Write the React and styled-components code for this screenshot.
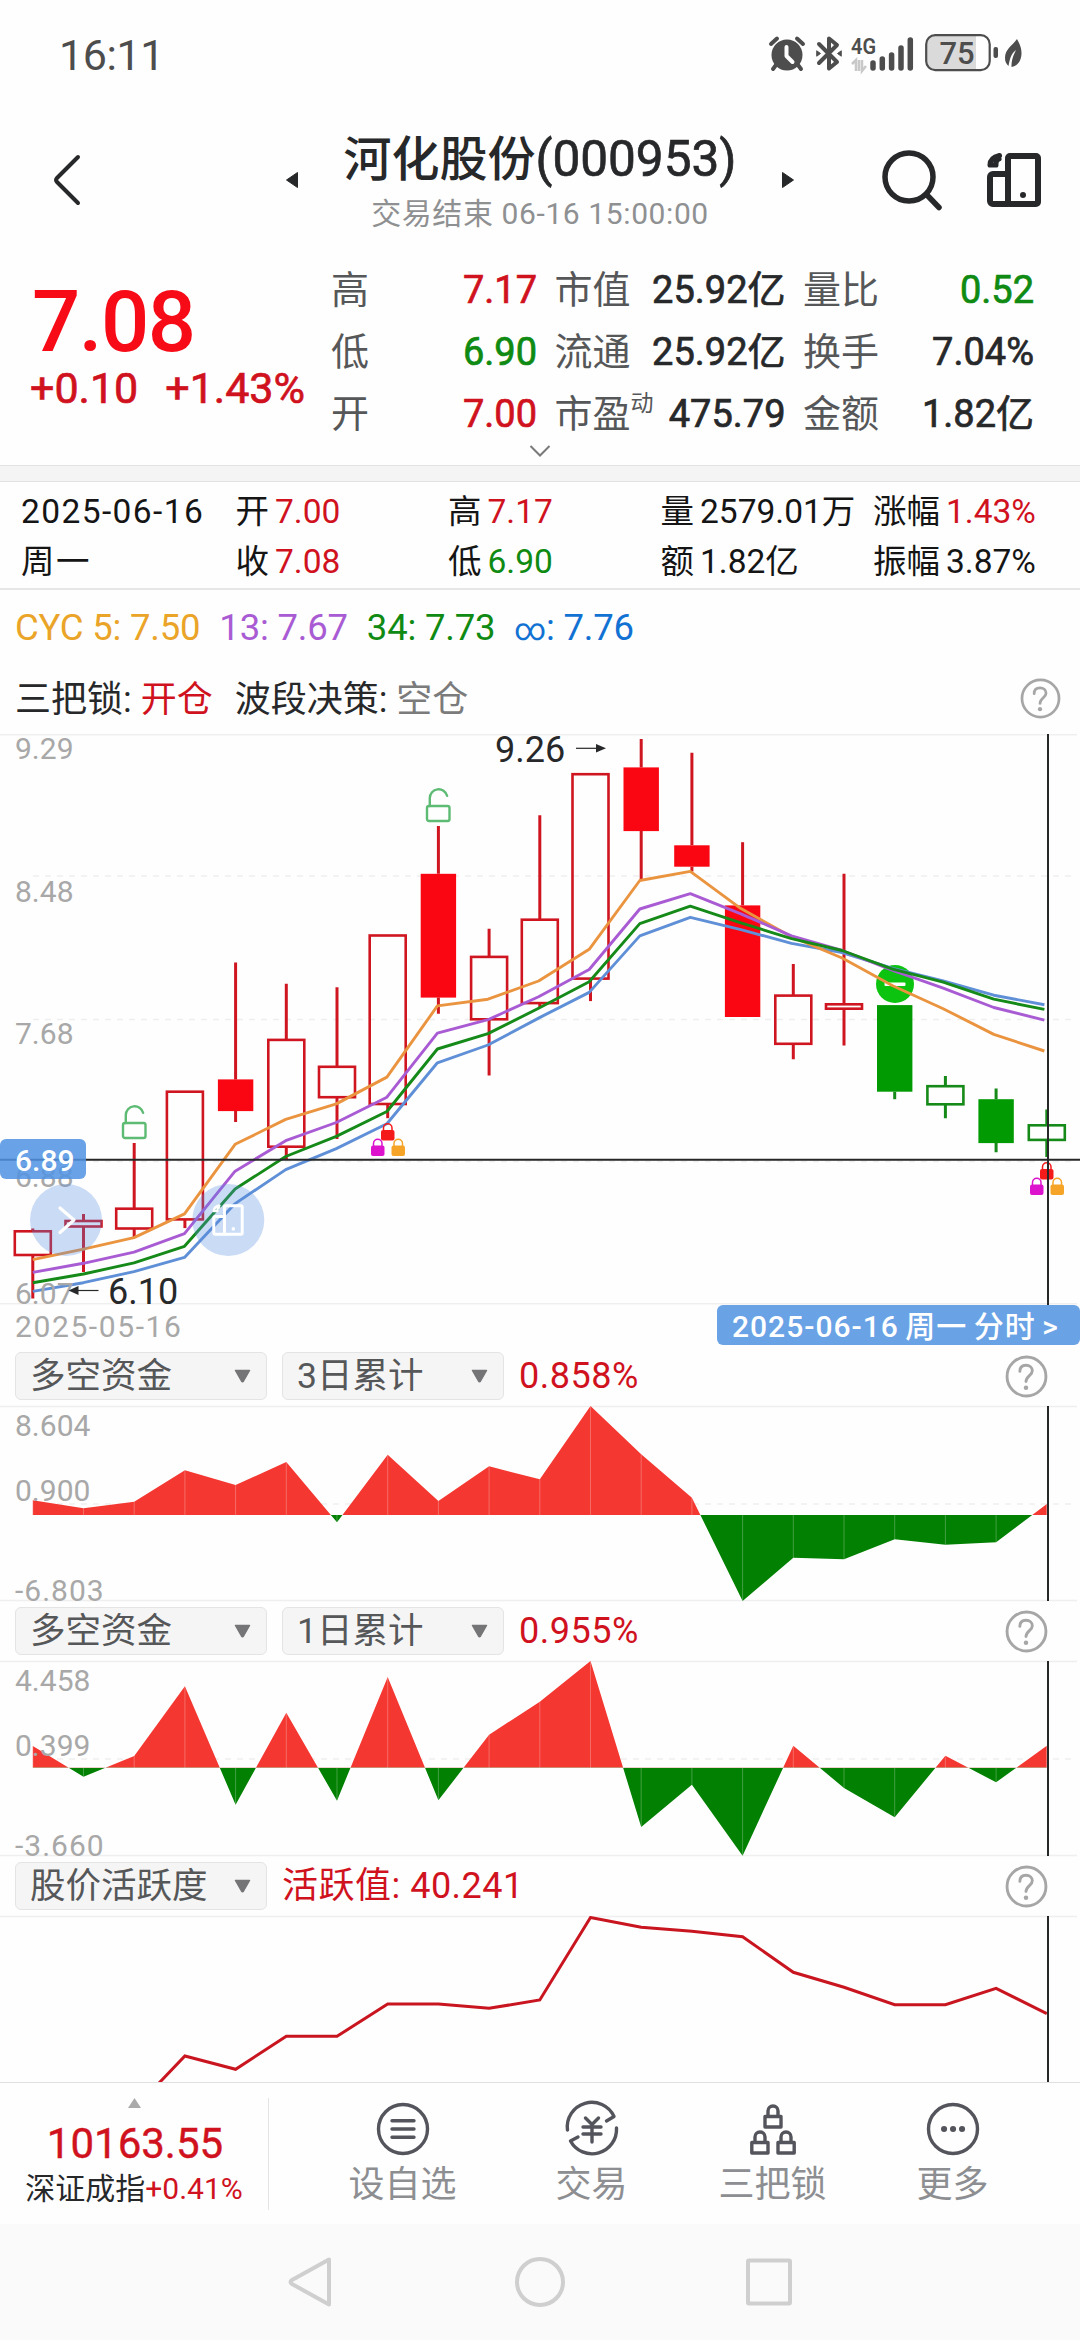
import React from 'react'
import styled, { createGlobalStyle } from 'styled-components';

const GlobalStyle = createGlobalStyle`
    *{
        box-sizing: border-box;
    }
    body{
        margin: 0;
        background: #fefefe;
        color: #27282a;
        font-family: Roboto, 'Noto Sans CJK SC', sans-serif;
    }
    svg{
        display: block;
        flex: none;
        overflow: visible;
    }
`;

const RED = '#d0121e';
const GREEN = '#0f8a12';

const STATS = [
    ['高', '7.17', RED], ['市值', '25.92亿'], ['量比', '0.52', GREEN],
    ['低', '6.90', GREEN], ['流通', '25.92亿'], ['换手', '7.04%'],
    ['开', '7.00', RED], ['市盈', '475.79', null, '动'], ['金额', '1.82亿'],
];

const DAY = [
    ['2025-06-16'], ['开', '7.00', RED], ['高', '7.17', RED], ['量', '2579.01万'], ['涨幅', '1.43%', RED],
    ['周一'], ['收', '7.08', RED], ['低', '6.90', GREEN], ['额', '1.82亿'], ['振幅', '3.87%'],
];

const FIRST_X = 32.8;
const STEP = 50.7;
const xAt = (i) => FIRST_X + i * STEP;

// high, body top, body bottom, low, kind (h = hollow, s = solid), direction
const CANDLES = [
    [494.5, 497.3, 521, 564.5, 'h', 'up'],
    [479.9, 487, 492.5, 538, 'h', 'up'],
    [409.1, 474.7, 494.5, 504, 'h', 'up'],
    [357.7, 357.7, 485.4, 494.1, 'h', 'up'],
    [228.4, 345.4, 377.1, 388.1, 's', 'up'],
    [249.7, 305.9, 412.7, 424.9, 'h', 'up'],
    [253.3, 332.8, 363.2, 405.1, 'h', 'up'],
    [201.5, 201.5, 370, 384.2, 'h', 'up'],
    [92, 139.8, 263.6, 279.8, 's', 'up'],
    [194.8, 222.9, 285.3, 341.5, 'h', 'up'],
    [81.3, 185.7, 269.1, 273.5, 'h', 'up'],
    [40.2, 40.2, 244.6, 267.1, 'h', 'up'],
    [5, 33.4, 97.1, 146.1, 's', 'up'],
    [18.8, 111.3, 132.7, 137.4, 's', 'up'],
    [108.2, 171.4, 283, 283, 's', 'up'],
    [230, 261.6, 309.8, 325.3, 'h', 'up'],
    [139.8, 270.3, 274.7, 311.4, 'h', 'up'],
    [271.1, 271.1, 357.7, 365.2, 's', 'down'],
    [341.9, 352.2, 370.3, 384.2, 'h', 'down'],
    [354.5, 365.2, 409.1, 418.2, 's', 'down'],
    [375.5, 391.3, 405.9, 422.9, 'h', 'down'],
];

const AVERAGES = [
    ['#5f8fd6', [557.4, 548.7, 537.6, 523.4, 469.6, 435.6, 414.6, 389.7, 328.8, 311, 284.1, 258.4, 201.9, 183.3, 195.6, 209.4, 218.5, 234.3, 247, 261.2, 270.7]],
    ['#ea9440', [525.7, 515.1, 503.6, 479.9, 410.3, 385.4, 369.9, 343.1, 271.9, 265.2, 247, 215.3, 146.5, 137.4, 174.6, 202.7, 224, 251.7, 274.7, 300.4, 317]],
    ['#a95bd3', [538.4, 529.3, 518.2, 499.6, 437.2, 406.7, 388.5, 363.2, 299.2, 285.7, 262.8, 235.5, 175, 159.6, 179.8, 201.9, 216.5, 236.3, 254.1, 273.5, 286.1]],
    ['#158a18', [548.7, 540, 528.9, 512.3, 455, 422.5, 402.4, 377.5, 315, 299.6, 274.3, 247.8, 189.6, 172.2, 188.8, 204.7, 216.5, 235.1, 248.2, 265.2, 275.4]],
];

const FUND_3D = [94.3, 102.3, 95.7, 64.3, 79, 56, 116.3, 48.7, 95, 60.3, 73.3, 0, 48.3, 91.7, 195, 151.7, 153.3, 133.3, 138.7, 136.3, 98];
const FUND_1D = [85, 115.7, 95, 25.3, 143.7, 51.7, 139.7, 16, 139.3, 73.7, 40.7, 0, 166, 123.7, 194.7, 84.7, 127, 156.3, 94.7, 121.3, 84.7];
const ACTIVE = [230, 210, 193, 140, 153.3, 120.3, 120.3, 88, 88, 92.3, 84, 1.5, 11.3, 15.3, 20.7, 56.3, 71.3, 88.7, 88.7, 72.3, 97.7];

function PhoneIcon({ size, stroke, color }) {
    return (
        <svg width={size} height={size} viewBox="0 0 54 54" fill="none" stroke={color} strokeWidth={stroke} strokeLinejoin="round" strokeLinecap="round">
            <rect x="21" y="3" width="30" height="48" rx="2" />
            <path d="M21 21H6a3 3 0 0 0-3 3v24a3 3 0 0 0 3 3h15" />
            <path d="M12.500 2.500C6 4 3 7 3 12h6M9 10.500c0-2.500.5-3.500 3-4.500" strokeWidth={stroke * 0.85} />
            <circle cx="36" cy="42" r="3" fill={color} stroke="none" />
        </svg>
    )
}

function Help({ size = 40 }) {
    return (
        <svg width={size} height={size + 2} viewBox="0 0 40 42" fill="none" stroke="#a6a6a6" strokeWidth="2.8" strokeLinecap="round">
            <circle cx="20" cy="21" r="19" />
            <path d="M13.5 16c0-4 2.5-6 6-6s6.200 2.200 6.200 5.500c0 4.500-6.200 5-6.200 10.500" />
            <circle cx="19.500" cy="32" r="2.200" fill="#a6a6a6" stroke="none" />
        </svg>
    )
}

function StatusIcons() {
    return (
        <StatusIconRow>
            <svg width="36" height="35" viewBox="0 0 36 35">
                <circle cx="18" cy="19" r="15.500" fill="#4d4d4d" />
                <path d="M2 8l6-5.500M34 8l-6-5.500M7 29l-3 4M29 29l3 4" stroke="#4d4d4d" strokeWidth="4" strokeLinecap="round" />
                <path d="M17.500 11v9l6 6" stroke="#fff" strokeWidth="4" fill="none" strokeLinecap="round" strokeLinejoin="round" />
            </svg>
            <svg width="26" height="35" viewBox="0 0 26 35" fill="none" stroke="#4d4d4d" strokeWidth="4" strokeLinejoin="round" strokeLinecap="round">
                <path d="M3 8l18 18-8 6.500V2.500L21 9 3 27" />
                <path d="M1 15l3.500 2.500L1 20zM25 15l-3.500 2.500L25 20z" fill="#4d4d4d" strokeWidth="1" />
            </svg>
            <svg width="63" height="35" viewBox="0 0 63 35">
                <text x="0" y="17.500" fontSize="22" fontWeight="600" fill="#4d4d4d" textLength="25" lengthAdjust="spacingAndGlyphs">4G</text>
                <path d="M1 28l4-4v11M8 24v11M11 24v11l4-5" fill="none" stroke="#c8c8c8" strokeWidth="2.500" />
                <g stroke="#4d4d4d" strokeWidth="5.500" strokeLinecap="round">
                    <path d="M22 27v5M31.300 23v9M40.600 19v13M50 12v20M59.300 4v28" />
                </g>
            </svg>
            <svg width="73" height="38" viewBox="0 0 73 38">
                <path d="M9 2h42v34H9a7 7 0 0 1-7-7V9a7 7 0 0 1 7-7z" fill="#dadada" />
                <rect x="1.200" y="1.200" width="63.500" height="35" rx="9" fill="none" stroke="#4d4d4d" strokeWidth="2.200" />
                <rect x="68.500" y="13" width="4.500" height="11" rx="2" fill="#4d4d4d" />
                <text x="14.500" y="30" fontSize="31" fontWeight="500" fill="#4d4d4d">75</text>
            </svg>
            <svg width="18" height="30" viewBox="0 0 18 30">
                <path d="M13 1C8 8 1 11 1 20c0 4 1.500 6 3.500 8C6 20 7 16 12 12 9 18 7.500 22 7.500 29 14 28 17.500 22 17.500 15 17.500 9 15 5 13 1z" fill="#4d4d4d" />
            </svg>
        </StatusIconRow>
    )
}

function OpenLock({ x, y }) {
    return (
        <g transform={`translate(${x} ${y})`} fill="none" stroke="#5dbb74" strokeWidth="2.400">
            <rect x="1" y="18" width="22.500" height="15" rx="2" />
            <path d="M3.800 18V10a8.800 8.800 0 0 1 17.300-2.200" strokeLinecap="round" />
        </g>
    )
}

function SmallLock({ x, y, color }) {
    return (
        <g transform={`translate(${x} ${y})`}>
            <rect x="0" y="7.500" width="13.500" height="10.500" rx="2" fill={color} />
            <path d="M2.500 8V5.500a4.200 4.200 0 0 1 8.500 0V8" fill="none" stroke={color} strokeWidth="1.500" />
        </g>
    )
}

function LockGroup({ x, y }) {
    return (
        <g transform={`translate(${x} ${y})`}>
            <SmallLock x={10} y={0} color="#f51a1a" />
            <SmallLock x={0} y={15.5} color="#dc12cc" />
            <SmallLock x={20.5} y={15.5} color="#f5a427" />
        </g>
    )
}

function Candle({ x, data }) {
    const [high, top, bottom, low, kind, dir] = data;
    const line = dir === 'up' ? '#cf1620' : '#168a18';
    const fill = dir === 'up' ? '#fa0512' : '#029a02';
    return (
        <g stroke={line} fill="none">
            <path d={`M${x} ${high}V${top}M${x} ${bottom}V${low}`} strokeWidth="3" />
            {kind === 's'
                ? <rect x={x - 17.7} y={top} width="35.400" height={bottom - top} fill={fill} stroke="none" />
                : <rect x={x - 18} y={top} width="36" height={bottom - top} strokeWidth="2.600" />}
        </g>
    )
}

const toPoints = (values, drift = 0) => values.map((y, i) => `${(xAt(i) - i * drift).toFixed(1)},${y}`).join(' ');

function PriceChart() {
    return (
        <svg width="1080" height="571" viewBox="0 0 1080 571">
            <g stroke="#efefef" strokeWidth="1.500">
                <path d="M0 .8H1077M0 569.800H1077" />
                <path d="M33 142H1077M33 285.500H1077M33 427.500H1077" strokeDasharray="6 6" />
            </g>
            {CANDLES.map((c, i) => <Candle key={i} x={xAt(i)} data={c} />)}
            <circle cx="895" cy="250" r="19" fill="#0cc40f" />
            <rect x="884.500" y="248.500" width="21" height="3.500" rx="1" fill="#fff" />
            <g fill="none" strokeWidth="2.900" strokeLinejoin="round">
                {AVERAGES.map(([color, values]) => <polyline key={color} stroke={color} points={toPoints(values, 0.12)} />)}
            </g>
            <OpenLock x={122} y={371} />
            <OpenLock x={426} y={54} />
            <LockGroup x={371} y={388.5} />
            <LockGroup x={1030} y={427.5} />
            <ScaleText x="15" y="25">9.29</ScaleText>
            <ScaleText x="15" y="168">8.48</ScaleText>
            <ScaleText x="15" y="310">7.68</ScaleText>
            <ScaleText x="15" y="453">6.88</ScaleText>
            <ScaleText x="15" y="569.500">6.07</ScaleText>
            <MarkText x="495" y="27.500">9.26</MarkText>
            <MarkText x="108" y="569.500">6.10</MarkText>
            <g stroke="#27282a" strokeWidth="1.200" fill="#27282a">
                <path d="M576 14.300H598" />
                <path d="M596 10l10 4.300-10 4.300z" strokeWidth="0" />
                <path d="M98.500 556.500H76" />
                <path d="M78.500 552l-10 4.500 10 4.500z" strokeWidth="0" />
            </g>
            <path d="M0 425.700H1080M1048 0V571" stroke="#262827" strokeWidth="2" />
            <rect x="0" y="405" width="86" height="40" rx="6" fill="#5093e2" fillOpacity=".86" />
            <TagText x="15" y="437">6.89</TagText>
            <circle cx="66" cy="486" r="36" fill="#538ce2" fillOpacity=".3" />
            <path d="M60 474l14 12-14 12.500" fill="none" stroke="#fff" strokeWidth="3.200" strokeLinecap="round" strokeLinejoin="round" />
            <circle cx="228.300" cy="486" r="36" fill="#538ce2" fillOpacity=".3" />
            <g transform="translate(212 470)"><PhoneIcon size={32} stroke={5} color="#fff" /></g>
        </svg>
    )
}

function AreaChart({ id, values, zero, labels }) {
    const last = xAt(values.length - 1);
    const area = `${FIRST_X},${zero} ${toPoints(values)} ${last},${zero}`;
    return (
        <svg width="1080" height="195" viewBox="0 0 1080 195">
            <clipPath id={`${id}-up`}><rect x="0" y="0" width="1080" height={zero} /></clipPath>
            <clipPath id={`${id}-down`}><rect x="0" y={zero} width="1080" height={195 - zero} /></clipPath>
            <clipPath id={`${id}-all`}><polygon points={area} /></clipPath>
            <g stroke="#efefef" strokeWidth="1.500">
                <path d="M0 .5H1077M0 194.500H1077" />
                <path d="M33 98H1077" strokeDasharray="6 6" />
            </g>
            <polygon points={area} fill="#f43831" clipPath={`url(#${id}-up)`} />
            <polygon points={area} fill="#028002" clipPath={`url(#${id}-down)`} />
            <g clipPath={`url(#${id}-all)`} stroke="#fff" strokeOpacity=".25">
                {values.map((v, i) => <path key={i} d={`M${xAt(i)} 0V195`} />)}
            </g>
            <ScaleText x="15" y="29.500">{labels[0]}</ScaleText>
            <ScaleText x="15" y="94.500">{labels[1]}</ScaleText>
            <ScaleText x="15" y="194.500" $spacing={1}>{labels[2]}</ScaleText>
            <path d="M1048 0V195" stroke="#262827" strokeWidth="2" />
        </svg>
    )
}

function LineChart() {
    return (
        <svg width="1080" height="166" viewBox="0 0 1080 166">
            <clipPath id="line-area"><rect width="1080" height="166" /></clipPath>
            <path d="M0 .5H1077" stroke="#efefef" strokeWidth="1.500" />
            <polyline points={toPoints(ACTIVE)} fill="none" stroke="#c9151f" strokeWidth="3" clipPath="url(#line-area)" />
            <path d="M1048 0V166" stroke="#262827" strokeWidth="2" />
        </svg>
    )
}

function Select({ width, children }) {
    return (
        <SelectBox $width={width}>
            {children}
            <svg width="17" height="14" viewBox="0 0 17 14">
                <path d="M1.500 1.500h14L9.500 12q-1 1.500-2 0z" fill="#757577" stroke="#757577" strokeWidth="1.500" strokeLinejoin="round" />
            </svg>
        </SelectBox>
    )
}

function Indicator({ name, period, value, children }) {
    return (
        <div>
            <IndicatorBar>
                <Select width={252}>{name}</Select>
                {period && <Select width={222}>{period}</Select>}
                <IndicatorValue>{value}</IndicatorValue>
                <Help size={41} />
            </IndicatorBar>
            {children}
        </div>
    )
}

function App() {
    return (
        <Screen>
            <GlobalStyle />
            <StatusBar>
                <Clock>16:11</Clock>
                <StatusIcons />
            </StatusBar>

            <Header>
                <svg width="28" height="50" viewBox="0 0 28 50">
                    <path d="M25 2L4 23q-2 2 0 4l21 21" fill="none" stroke="#27282a" strokeWidth="4" strokeLinecap="round" />
                </svg>
                <TitleGroup>
                    <svg width="12" height="16" viewBox="0 0 12 16"><path d="M11.500.5v15L.5 8z" fill="#27282a" stroke="#27282a" strokeLinejoin="round" /></svg>
                    <TitleText>
                        <h1>河化股份<span>(000953)</span></h1>
                        <p>交易结束 06-16 15:00:00</p>
                    </TitleText>
                    <svg width="12" height="16" viewBox="0 0 12 16"><path d="M.5.5v15L11.500 8z" fill="#27282a" stroke="#27282a" strokeLinejoin="round" /></svg>
                </TitleGroup>
                <svg width="60" height="60" viewBox="0 0 60 60" fill="none" stroke="#27282a" strokeWidth="5.500" strokeLinecap="round">
                    <circle cx="27" cy="27" r="24" />
                    <path d="M44.500 44.500L57 57.500" />
                </svg>
                <PhoneIcon size={54} stroke={6} color="#27282a" />
            </Header>

            <Quote>
                <PriceBlock>
                    <Price>7.08</Price>
                    <Change><span>+0.10</span><span>+1.43%</span></Change>
                </PriceBlock>
                <StatGrid>
                    {STATS.map(([label, value, color, sup]) => (
                        <Stat key={label}>
                            <span>{label}{sup && <sup>{sup}</sup>}</span>
                            <StatValue $color={color}>{value}</StatValue>
                        </Stat>
                    ))}
                </StatGrid>
            </Quote>
            <Expand>
                <svg width="22" height="12" viewBox="0 0 22 12"><path d="M1.500 1l9.500 9.500L20.500 1" fill="none" stroke="#7a7a7a" strokeWidth="2" /></svg>
            </Expand>
            <Band />

            <DayGrid>
                {DAY.map(([label, value, color]) => (
                    <DayCell key={label} $color={color} $wide={!value}>{label}{value && <b>{value}</b>}</DayCell>
                ))}
            </DayGrid>

            <CycRow>
                <Tinted $color="#eaa428">CYC 5: 7.50</Tinted>
                <Tinted $color="#a95bd3">13: 7.67</Tinted>
                <Tinted $color={GREEN}>34: 7.73</Tinted>
                <Tinted $color="#1272d3"><Infinite>∞</Infinite>: 7.76</Tinted>
            </CycRow>
            <SignalRow>
                <span>三把锁: <Tinted $color={RED}>开仓</Tinted></span>
                <span>波段决策: <Tinted $color="#7b7b7b">空仓</Tinted></span>
                <Help size={39} />
            </SignalRow>

            <PriceChart />
            <DateRow>
                <span>2025-05-16</span>
                <DateTag>2025-06-16 周一 分时 &gt;</DateTag>
            </DateRow>

            <Indicator name="多空资金" period="3日累计" value="0.858%">
                <AreaChart id="f3" values={FUND_3D} zero={109} labels={['8.604', '0.900', '-6.803']} />
            </Indicator>
            <Indicator name="多空资金" period="1日累计" value="0.955%">
                <AreaChart id="f1" values={FUND_1D} zero={106.8} labels={['4.458', '0.399', '-3.660']} />
            </Indicator>
            <Indicator name="股价活跃度" value="活跃值: 40.241">
                <LineChart />
            </Indicator>

            <BottomBar>
                <IndexBlock>
                    <svg width="13" height="10" viewBox="0 0 13 10"><path d="M6.500 0L13 10H0z" fill="#aaa" /></svg>
                    <IndexValue>10163.55</IndexValue>
                    <IndexName>深证成指<Tinted $color={RED}>+0.41%</Tinted></IndexName>
                </IndexBlock>
                <NavItems>
                    <NavItem $width={189}>
                        <svg width="54" height="54" viewBox="-27 -27 54 54">
                            <circle r="24.500" />
                            <path d="M-11-8.300H11M-11 0H11M-11 8.300H11" />
                        </svg>
                        设自选
                    </NavItem>
                    <NavItem $width={189}>
                        <svg width="54" height="54" viewBox="-27 -27 54 54">
                            <path d="M-24.500 1A24.500 24.500 0 0 1 22-12.500L14.500-8M24.500-1A24.500 24.500 0 0 1-21.500 12L-14 8" />
                            <path d="M-6.500-11L0-4.500 6.500-11M-9-2H9M-9 5H9M0-4V13" />
                        </svg>
                        交易
                    </NavItem>
                    <NavItem $width={173}>
                        <svg width="54" height="54" viewBox="-27 -27 54 54">
                            <path d="M-8-12.500H8V-2H-8zM-5-12.500V-18a5 5 0 0 1 10 0V-12.500" />
                            <path d="M-21.200 13.500H-5V24H-21.200zM-18 13.500V8a5 5 0 0 1 10 0V13.500" />
                            <path d="M5 13.500H21.200V24H5zM8 13.500V8a5 5 0 0 1 10 0V13.500" />
                        </svg>
                        三把锁
                    </NavItem>
                    <NavItem $width={187}>
                        <svg width="54" height="54" viewBox="-27 -27 54 54">
                            <circle r="24.500" />
                            <path d="M-9 0h.1M0 0h.1M9 0h.1" strokeWidth="6" />
                        </svg>
                        更多
                    </NavItem>
                </NavItems>
            </BottomBar>

            <SystemNav>
                <svg width="46" height="54" viewBox="0 0 46 54"><path d="M41 4.500v45L4 29q-3-2 0-4z" /></svg>
                <svg width="52" height="54" viewBox="-26 -27 52 54"><circle r="23" /></svg>
                <svg width="46" height="54" viewBox="0 0 46 54"><rect x="2" y="5.500" width="42" height="43" rx="1" /></svg>
            </SystemNav>
        </Screen>
    )
}

const Screen = styled.div`
    width: 1080px;
    height: 2340px;
    overflow: hidden;
    display: flex;
    flex-direction: column;
    background: #fefefe;
`;

const StatusBar = styled.div`
    display: flex;
    justify-content: space-between;
    height: 107px;
    padding: 0 58px 0 59px;
    color: #4d4d4d;
`;

const Clock = styled.div`
    padding-top: 30px;
    font-size: 43px;
    line-height: 50px;
    letter-spacing: -0.4px;
`;

const StatusIconRow = styled.div`
    display: flex;
    align-items: center;
    gap: 11px;
    svg:nth-child(2){
        margin-right: -2px;
    }
    svg:nth-child(5){
        margin-left: -5px;
    }
`;

const Header = styled.header`
    display: flex;
    align-items: center;
    height: 143px;
    padding: 3px 39px 0 53px;
    > svg:nth-of-type(1){
        margin-right: 205px;
    }
    > svg:nth-of-type(2){
        margin: 0 45px 0 88px;
    }
`;

const TitleGroup = styled.div`
    display: flex;
    align-items: center;
    justify-content: space-between;
    width: 508px;
`;

const TitleText = styled.div`
    padding-top: 3px;
    text-align: center;
    white-space: nowrap;
    h1{
        margin: 0;
        font-size: 48px;
        font-weight: 500;
        line-height: 64px;
    }
    h1 span{
        font-size: 49.5px;
        font-weight: 400;
        -webkit-text-stroke: 0.7px;
    }
    p{
        margin: 0;
        font-size: 30px;
        line-height: 44px;
        letter-spacing: 0.6px;
        color: #8f9092;
    }
`;

const Quote = styled.section`
    display: flex;
    height: 195px;
    padding: 9px 46px 0 30px;
`;

const PriceBlock = styled.div`
    width: 301px;
    padding-top: 18px;
`;

const Price = styled.div`
    padding-left: 2px;
    font-size: 85px;
    font-weight: 500;
    line-height: 90px;
    letter-spacing: -1.5px;
    color: #f60b17;
`;

const Change = styled.div`
    display: flex;
    gap: 27px;
    font-size: 43px;
    line-height: 42px;
    -webkit-text-stroke: 0.7px;
    color: ${RED};
`;

const StatGrid = styled.div`
    display: grid;
    grid-template-columns: 206px 231px 231px;
    column-gap: 17.5px;
    grid-auto-rows: 62px;
    white-space: nowrap;
`;

const Stat = styled.div`
    display: flex;
    justify-content: space-between;
    font-size: 38px;
    line-height: 62px;
    color: #565759;
    sup{
        font-size: 23px;
        line-height: 0;
        vertical-align: 16px;
    }
`;

const StatValue = styled.span`
    -webkit-text-stroke: 0.7px;
    color: ${({ $color }) => $color || '#27282a'};
`;

const Expand = styled.div`
    display: flex;
    justify-content: center;
    height: 20px;
`;

const Band = styled.div`
    height: 17px;
    background: #f4f4f4;
    border: solid #e2e2e2;
    border-width: 1px 0;
`;

const DayGrid = styled.section`
    display: grid;
    grid-template-columns: 214.5px 212.5px 212.5px 212.5px 1fr;
    grid-auto-rows: 50px;
    height: 109px;
    padding: 5px 0 0 21px;
    border-bottom: 2px solid #e6e6e6;
    font-size: 33.5px;
    line-height: 50px;
    color: #151515;
    white-space: nowrap;
`;

const DayCell = styled.div`
    letter-spacing: ${({ $wide }) => ($wide ? '1.4px' : 0)};
    b{
        margin-left: 6px;
        font-weight: 400;
        color: ${({ $color }) => $color || 'inherit'};
    }
`;

const Tinted = styled.span`
    color: ${({ $color }) => $color};
`;

const CycRow = styled.div`
    display: flex;
    gap: 19px;
    height: 76px;
    padding-left: 15px;
    font-size: 36.5px;
    line-height: 76px;
    letter-spacing: -0.2px;
`;

const Infinite = styled.span`
    font-size: 31px;
`;

const SignalRow = styled.div`
    display: flex;
    align-items: center;
    gap: 22px;
    height: 68px;
    padding: 0 20px 0 15px;
    font-size: 36px;
    line-height: 68px;
    svg{
        margin: 0 0 4px auto;
    }
`;

const ScaleText = styled.text`
    font-size: 30px;
    letter-spacing: ${({ $spacing = 0 }) => $spacing}px;
    fill: #a8a8a8;
`;

const MarkText = styled.text`
    font-size: 36px;
    fill: #27282a;
`;

const TagText = styled.text`
    font-size: 30px;
    font-weight: 500;
    fill: #fff;
`;

const DateRow = styled.div`
    display: flex;
    justify-content: space-between;
    height: 41px;
    padding-left: 15px;
    font-size: 30px;
    line-height: 43px;
    letter-spacing: 1.6px;
    color: #a8a8a8;
`;

const DateTag = styled.div`
    width: 363px;
    height: 40px;
    padding-left: 15px;
    border-radius: 6px;
    background: #6aa2e6;
    color: #fff;
    font-weight: 500;
    letter-spacing: 1px;
    word-spacing: -2px;
    white-space: nowrap;
`;

const IndicatorBar = styled.div`
    display: flex;
    align-items: center;
    gap: 15px;
    height: 60px;
    padding: 0 33px 0 15px;
    > svg{
        margin-left: auto;
    }
`;

const SelectBox = styled.div`
    display: flex;
    align-items: center;
    justify-content: space-between;
    width: ${({ $width }) => $width}px;
    height: 48px;
    padding: 0 15px 0 14px;
    border: 1px solid #e4e4e4;
    border-radius: 6px;
    background: #f5f5f5;
    font-size: 35.5px;
    line-height: 50px;
    color: #565759;
    white-space: nowrap;
`;

const IndicatorValue = styled.div`
    font-size: 36px;
    line-height: 60px;
    letter-spacing: 0.5px;
    color: ${RED};
`;

const BottomBar = styled.nav`
    display: flex;
    height: 142px;
    border-top: 1px solid #e0e0e0;
`;

const IndexBlock = styled.div`
    display: flex;
    flex-direction: column;
    align-items: center;
    width: 269px;
    height: 112px;
    margin-top: 15px;
    border-right: 1px solid #e4e4e4;
    white-space: nowrap;
`;

const IndexValue = styled.div`
    margin-top: 12px;
    padding-left: 2px;
    font-size: 42px;
    line-height: 48px;
    -webkit-text-stroke: 0.4px;
    color: ${RED};
`;

const IndexName = styled.div`
    font-size: 30px;
    line-height: 41px;
`;

const NavItems = styled.div`
    display: flex;
    padding-left: 39px;
`;

const NavItem = styled.div`
    display: flex;
    flex-direction: column;
    align-items: center;
    width: ${({ $width }) => $width}px;
    padding-top: 19px;
    font-size: 36px;
    line-height: 59px;
    color: #8d8e91;
    svg{
        fill: none;
        stroke: #54555c;
        stroke-width: 3.400;
        stroke-linecap: round;
        stroke-linejoin: round;
    }
`;

const SystemNav = styled.div`
    display: flex;
    align-items: center;
    justify-content: center;
    gap: 180px;
    height: 116px;
    background: #fafafa;
    svg{
        fill: none;
        stroke: #cfcfcf;
        stroke-width: 4;
        stroke-linejoin: round;
    }
`;

export default App;
